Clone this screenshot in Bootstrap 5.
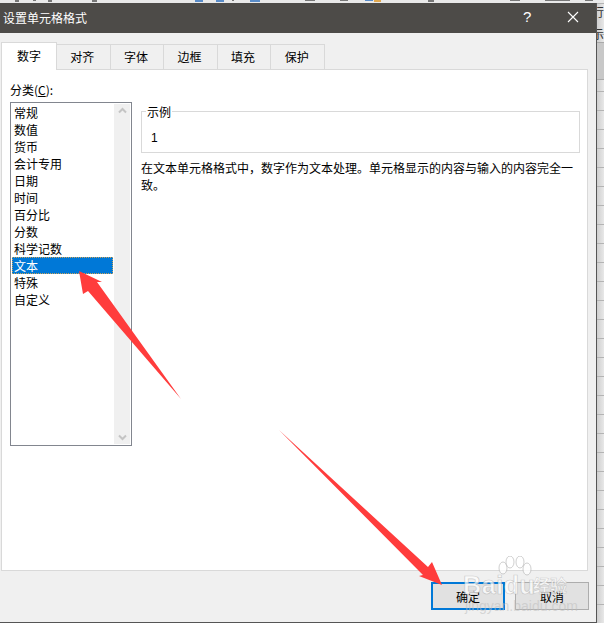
<!DOCTYPE html>
<html lang="zh">
<head>
<meta charset="utf-8">
<title>设置单元格格式</title>
<link rel="stylesheet" href="https://cdn.jsdelivr.net/npm/bootstrap@5.3.0/dist/css/bootstrap.min.css">
<style>
html,body{height:100%;margin:0}
body{width:604px;height:623px;overflow:hidden;background:#e4e4e4;font:12px/17px "Noto Sans CJK SC","Liberation Sans",sans-serif;color:#000;position:relative}
.topstrip{height:3px;background:#e9e9e9;display:block;width:604px}
.shell{height:620px}
.dlg{width:597px;height:620px;background:#f0f0f0;border-right:1px solid #555;border-bottom:1px solid #555}
.ttl{height:30px;background:#4d4b48;color:#fff;padding:0 0 0 3px;font-size:12px;line-height:29px}
.helpq{position:absolute;left:523px;top:7px;font:15px/20px "Liberation Sans",sans-serif;color:#fff}
.closex{position:absolute;left:567px;top:11px}
.side{width:7px;height:620px;overflow:hidden;font-size:12px;background:repeating-linear-gradient(to bottom,transparent 0,transparent 18px,#b4b4b4 18px,#b4b4b4 19px) 0 13px,linear-gradient(to right,#cfcfcf,#e8e8e8)}
.side span{display:block;height:17px;line-height:17px;white-space:nowrap;margin-left:-5px;color:#333}
.side .gp{height:5px;margin:0}
.side .gc{height:38px;background:#c8c8c8;margin:0;border-top:1px solid #aaa;border-bottom:1px solid #aaa}
.tabrow{height:36px;padding:9px 0 0 1px;align-items:flex-end}
.tb{width:53.6px;height:25px;line-height:24px;text-align:center;border:1px solid #d9d9d9;border-bottom:0;border-left:0;background:#f0f0f0;color:#000;padding-right:2px}
.tb.on{width:56px;height:28px;line-height:25px;background:#fff;border-left:1px solid #d9d9d9;margin-bottom:-1px;position:relative;z-index:1;padding:0 0 3px 0}
.pane{width:587px;height:502px;margin-left:1px;background:#fff;border:1px solid #d9d9d9;padding:11px 8px 0 8px;gap:9px}
.lbl{line-height:17px;margin-bottom:4px}
.lbl u{text-underline-offset:1px}
.leftcol{width:122px;flex:none}
.lbox{width:122px;height:344px;border:1px solid #82868f;padding:1px;background:#fff}
.itm{height:17px;line-height:18px;padding-left:2px;width:101px;white-space:nowrap}
.itm.sel{background:#0078d7;color:#fff;outline:1px dotted #c9a35a;outline-offset:-1px}
.sb{width:16px;height:100%;background:#f0f0f0;flex:none;margin-left:1px;padding:3px 0}
.rightcol{flex:1;padding-top:30px;min-width:0}
.fs{width:439px;height:42px;border:1px solid #d9d9d9;position:relative;padding:18px 0 0 9px;line-height:17px;font-family:"Liberation Sans",sans-serif}
.fs b{position:absolute;left:4px;top:-7px;font:12px/14px "Noto Sans CJK SC",sans-serif;background:#fff;padding:0 1px}
.desc{width:438px;margin-top:6px;line-height:17px}
.foot{height:50px;padding:11px 7px 0 0;gap:10px}
.wbtn{width:74px;height:28px;padding:0;border-radius:0;font-size:12px;line-height:25px;background:#e1e1e1;border:1px solid #adadad;color:#000}
.wbtn.def{border:2px solid #0078d7}
.over{position:absolute;left:0;top:0;pointer-events:none}
.wm{position:absolute;left:463px;top:556px;width:110px;height:60px;pointer-events:none}
.wmp{position:absolute;left:0;top:0}
.wmb{position:absolute;left:0;top:14px;font:bold 25px/30px "Liberation Sans",sans-serif;color:rgba(255,255,255,.72);-webkit-text-stroke:.7px rgba(160,160,160,.5);letter-spacing:.6px}
.wmj{position:absolute;left:70px;top:19px;font:bold 17px/20px "Noto Sans CJK SC",sans-serif;color:rgba(255,255,255,.72);-webkit-text-stroke:.5px rgba(160,160,160,.5)}
.wmu{position:absolute;left:2px;top:43px;font:14px/14px "Liberation Sans",sans-serif;color:rgba(190,190,190,.55);white-space:nowrap}
</style>
</head>
<body>
<svg class="topstrip" width="604" height="3" viewBox="0 0 604 3" aria-hidden="true"><g fill="#777"><rect x="15" width="4" height="2"/><rect x="33" width="3" height="1"/><rect x="48" width="4" height="2"/><rect x="92" width="5" height="2"/><rect x="232" width="2" height="1"/><rect x="305" width="10" height="1"/><rect x="340" width="8" height="1"/><rect x="428" width="6" height="2"/><rect x="510" width="10" height="1"/><rect x="545" width="25" height="1"/><rect x="585" width="8" height="1"/></g><g fill="#5a8cc8"><rect x="195" width="8" height="2"/><rect x="216" width="8" height="2"/><rect x="250" width="10" height="2"/><rect x="365" width="8" height="1"/></g><rect x="374" width="7" height="2" fill="#e0a850"/></svg>
<div class="shell d-flex">
  <div class="dlg d-flex flex-column">
    <div class="ttl">设置单元格格式</div>
    <div class="tabrow d-flex">
      <div class="tb on">数字</div>
      <div class="tb">对齐</div>
      <div class="tb">字体</div>
      <div class="tb">边框</div>
      <div class="tb">填充</div>
      <div class="tb">保护</div>
    </div>
    <div class="pane d-flex">
      <div class="leftcol">
        <div class="lbl">分类(<u>C</u>):</div>
        <div class="lbox d-flex">
          <div class="flex-grow-1">
            <div class="itm">常规</div>
            <div class="itm">数值</div>
            <div class="itm">货币</div>
            <div class="itm">会计专用</div>
            <div class="itm">日期</div>
            <div class="itm">时间</div>
            <div class="itm">百分比</div>
            <div class="itm">分数</div>
            <div class="itm">科学记数</div>
            <div class="itm sel">文本</div>
            <div class="itm">特殊</div>
            <div class="itm">自定义</div>
          </div>
          <div class="sb d-flex flex-column justify-content-between align-items-center">
            <svg width="9" height="7" viewBox="0 0 9 7" aria-hidden="true"><path d="M1 5.5 4.5 2 8 5.5" fill="none" stroke="#c4c4c4" stroke-width="2"/></svg>
            <svg width="9" height="7" viewBox="0 0 9 7" aria-hidden="true"><path d="M1 1.5 4.5 5 8 1.5" fill="none" stroke="#c4c4c4" stroke-width="2"/></svg>
          </div>
        </div>
      </div>
      <div class="rightcol">
        <div class="fs"><b>示例</b>1</div>
        <div class="desc">在文本单元格格式中，数字作为文本处理。单元格显示的内容与输入的内容完全一致。</div>
      </div>
    </div>
    <div class="foot d-flex justify-content-end">
      <button type="button" class="btn wbtn def">确定</button>
      <button type="button" class="btn wbtn">取消</button>
    </div>
  </div>
  <div class="side"><span>行</span><span class="gp"></span><span>示</span><span class="gc"></span></div>
</div>
<div class="helpq">?</div>
<svg class="closex" width="12" height="12" viewBox="0 0 12 12" aria-hidden="true"><path d="M1 1 11 11M11 1 1 11" stroke="#fff" stroke-width="1.1" fill="none"/></svg>
<svg class="over" width="604" height="623" viewBox="0 0 604 623" aria-hidden="true">
  <polygon fill="#ff3c3c" points="79,271 102,282 97,282 181,399 88,291 83,294"/>
  <polygon fill="#ff3c3c" points="442,585 419,576 423,575 279,430 428,567 432,562"/>
</svg>
<div class="wm" aria-hidden="true">
  <svg class="wmp" width="110" height="60" viewBox="0 0 110 60"><g fill="rgba(255,255,255,.75)" stroke="rgba(160,160,160,.5)"><ellipse cx="40" cy="12" rx="4" ry="6"/><ellipse cx="47" cy="6" rx="4" ry="6"/><ellipse cx="57" cy="6" rx="4" ry="6"/><ellipse cx="64" cy="13" rx="4" ry="6"/></g></svg>
  <div class="wmb">Baidu</div>
  <div class="wmj">经验</div>
  <div class="wmu">jingyan.baidu.com</div>
</div>
</body>
</html>
